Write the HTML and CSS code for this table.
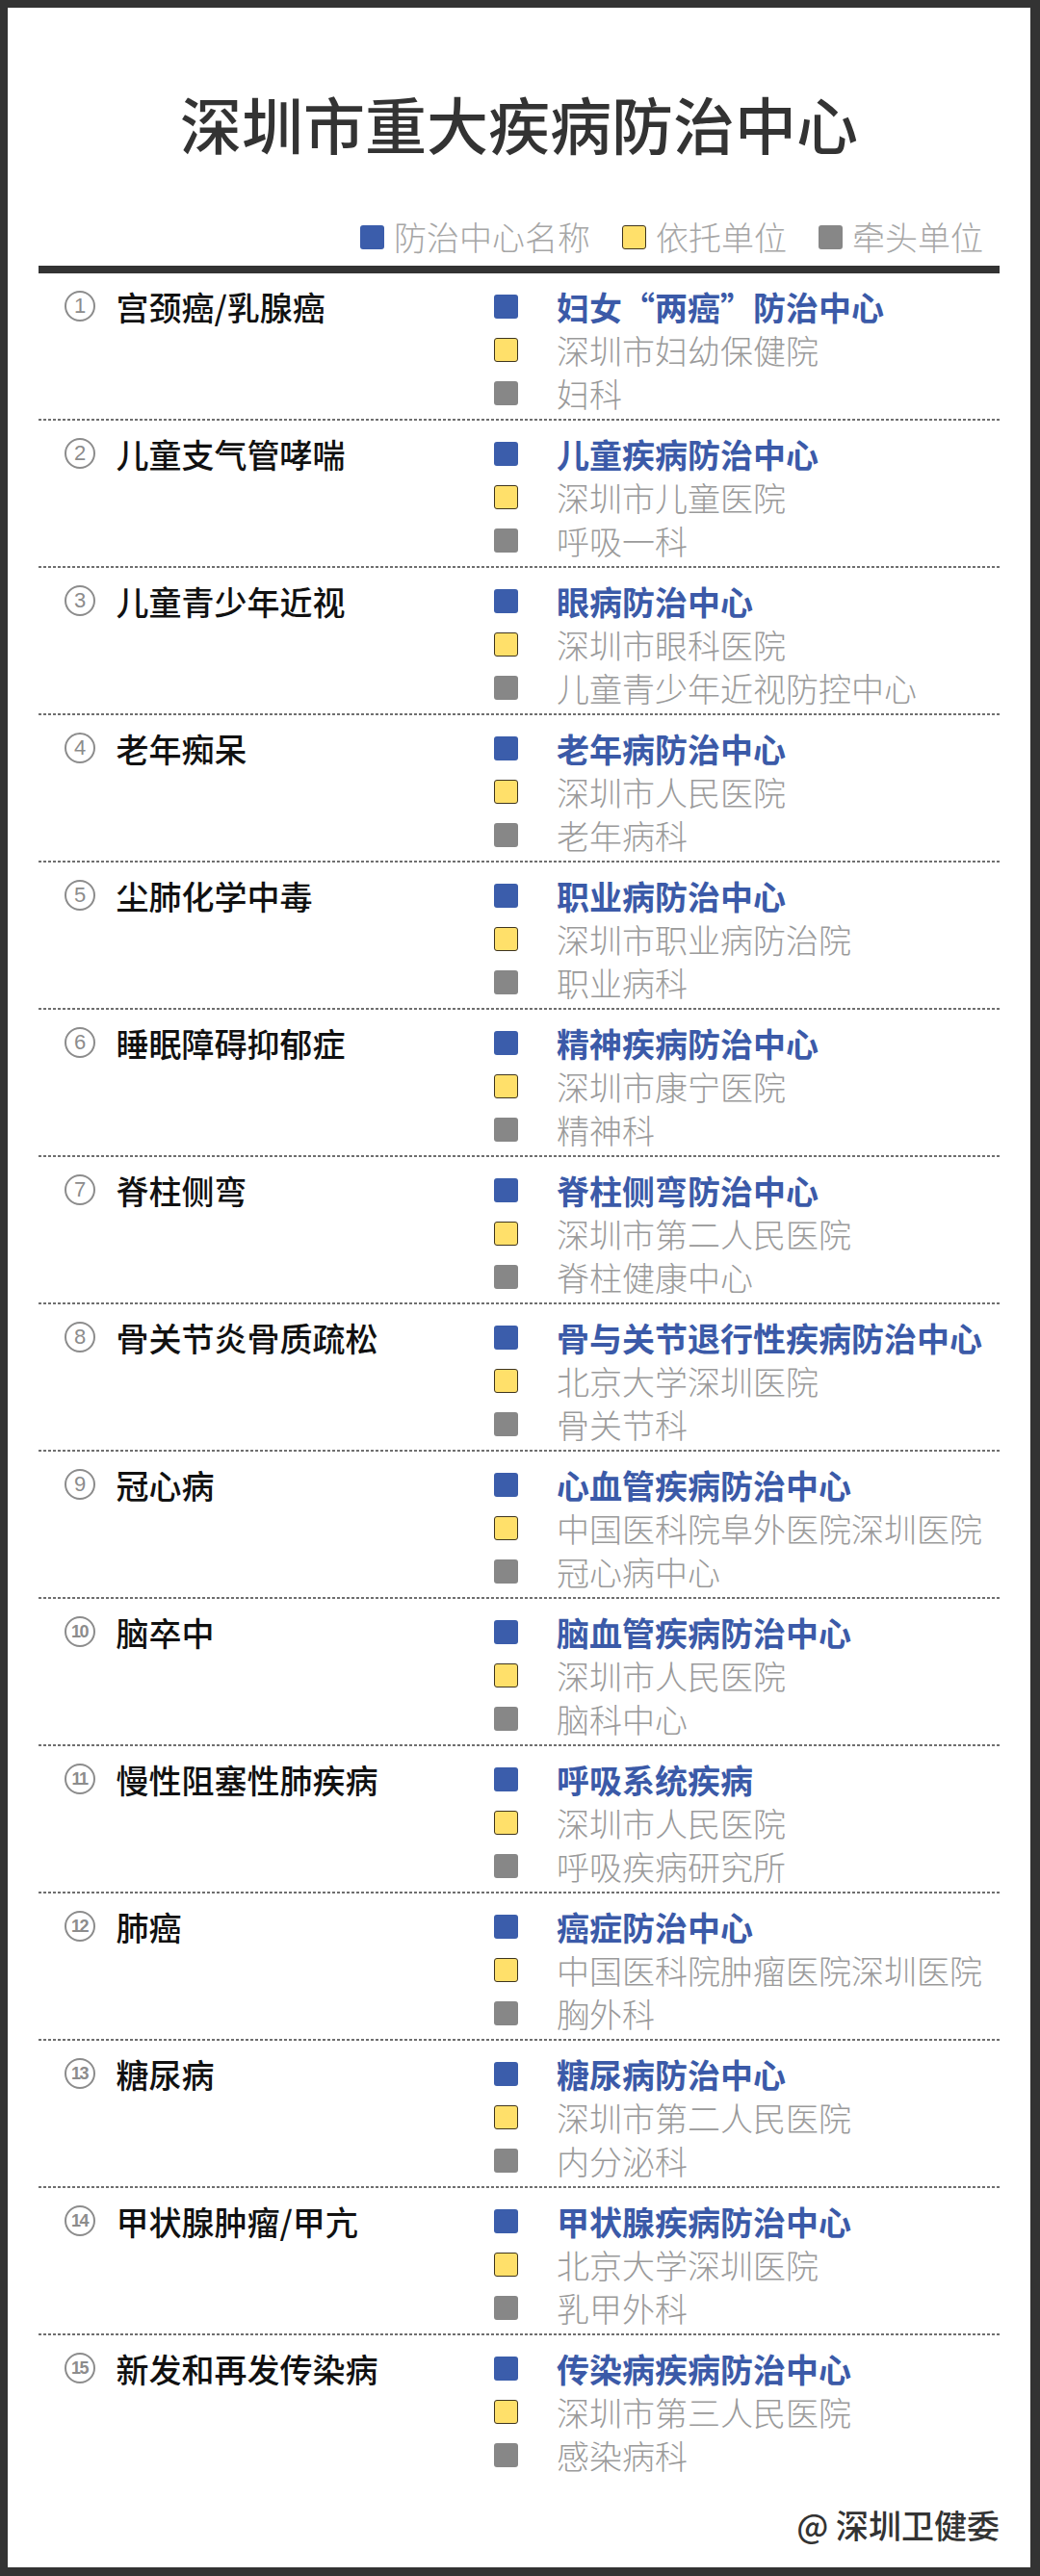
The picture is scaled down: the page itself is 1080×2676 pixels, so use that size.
FILE: index.html
```html
<!DOCTYPE html>
<html lang="zh-CN">
<head>
<meta charset="utf-8">
<title>深圳市重大疾病防治中心</title>
<link rel="stylesheet" href="styles.css">
</head>
<body>
<div class="frame">
  <div class="sheet">
    <h1 class="title">深圳市重大疾病防治中心</h1>
    <div class="legend">
      <span class="legend-item"><i class="sq sq-blue"></i>防治中心名称</span>
      <span class="legend-item"><i class="sq sq-yellow"></i>依托单位</span>
      <span class="legend-item"><i class="sq sq-gray"></i>牵头单位</span>
    </div>
    <div class="rule"></div>

    <div class="rows">
    <div class="row">
      <div class="disease"><span class="num">1</span><span class="name">宫颈癌/乳腺癌</span></div>
      <div class="units">
        <div class="line center"><i class="sq sq-blue"></i>妇女“两癌”防治中心</div>
        <div class="line host"><i class="sq sq-yellow"></i>深圳市妇幼保健院</div>
        <div class="line lead"><i class="sq sq-gray"></i>妇科</div>
      </div>
    </div>
    <div class="row">
      <div class="disease"><span class="num">2</span><span class="name">儿童支气管哮喘</span></div>
      <div class="units">
        <div class="line center"><i class="sq sq-blue"></i>儿童疾病防治中心</div>
        <div class="line host"><i class="sq sq-yellow"></i>深圳市儿童医院</div>
        <div class="line lead"><i class="sq sq-gray"></i>呼吸一科</div>
      </div>
    </div>
    <div class="row">
      <div class="disease"><span class="num">3</span><span class="name">儿童青少年近视</span></div>
      <div class="units">
        <div class="line center"><i class="sq sq-blue"></i>眼病防治中心</div>
        <div class="line host"><i class="sq sq-yellow"></i>深圳市眼科医院</div>
        <div class="line lead"><i class="sq sq-gray"></i>儿童青少年近视防控中心</div>
      </div>
    </div>
    <div class="row">
      <div class="disease"><span class="num">4</span><span class="name">老年痴呆</span></div>
      <div class="units">
        <div class="line center"><i class="sq sq-blue"></i>老年病防治中心</div>
        <div class="line host"><i class="sq sq-yellow"></i>深圳市人民医院</div>
        <div class="line lead"><i class="sq sq-gray"></i>老年病科</div>
      </div>
    </div>
    <div class="row">
      <div class="disease"><span class="num">5</span><span class="name">尘肺化学中毒</span></div>
      <div class="units">
        <div class="line center"><i class="sq sq-blue"></i>职业病防治中心</div>
        <div class="line host"><i class="sq sq-yellow"></i>深圳市职业病防治院</div>
        <div class="line lead"><i class="sq sq-gray"></i>职业病科</div>
      </div>
    </div>
    <div class="row">
      <div class="disease"><span class="num">6</span><span class="name">睡眠障碍抑郁症</span></div>
      <div class="units">
        <div class="line center"><i class="sq sq-blue"></i>精神疾病防治中心</div>
        <div class="line host"><i class="sq sq-yellow"></i>深圳市康宁医院</div>
        <div class="line lead"><i class="sq sq-gray"></i>精神科</div>
      </div>
    </div>
    <div class="row">
      <div class="disease"><span class="num">7</span><span class="name">脊柱侧弯</span></div>
      <div class="units">
        <div class="line center"><i class="sq sq-blue"></i>脊柱侧弯防治中心</div>
        <div class="line host"><i class="sq sq-yellow"></i>深圳市第二人民医院</div>
        <div class="line lead"><i class="sq sq-gray"></i>脊柱健康中心</div>
      </div>
    </div>
    <div class="row">
      <div class="disease"><span class="num">8</span><span class="name">骨关节炎骨质疏松</span></div>
      <div class="units">
        <div class="line center"><i class="sq sq-blue"></i>骨与关节退行性疾病防治中心</div>
        <div class="line host"><i class="sq sq-yellow"></i>北京大学深圳医院</div>
        <div class="line lead"><i class="sq sq-gray"></i>骨关节科</div>
      </div>
    </div>
    <div class="row">
      <div class="disease"><span class="num">9</span><span class="name">冠心病</span></div>
      <div class="units">
        <div class="line center"><i class="sq sq-blue"></i>心血管疾病防治中心</div>
        <div class="line host"><i class="sq sq-yellow"></i>中国医科院阜外医院深圳医院</div>
        <div class="line lead"><i class="sq sq-gray"></i>冠心病中心</div>
      </div>
    </div>
    <div class="row">
      <div class="disease"><span class="num num2">10</span><span class="name">脑卒中</span></div>
      <div class="units">
        <div class="line center"><i class="sq sq-blue"></i>脑血管疾病防治中心</div>
        <div class="line host"><i class="sq sq-yellow"></i>深圳市人民医院</div>
        <div class="line lead"><i class="sq sq-gray"></i>脑科中心</div>
      </div>
    </div>
    <div class="row">
      <div class="disease"><span class="num num2">11</span><span class="name">慢性阻塞性肺疾病</span></div>
      <div class="units">
        <div class="line center"><i class="sq sq-blue"></i>呼吸系统疾病</div>
        <div class="line host"><i class="sq sq-yellow"></i>深圳市人民医院</div>
        <div class="line lead"><i class="sq sq-gray"></i>呼吸疾病研究所</div>
      </div>
    </div>
    <div class="row">
      <div class="disease"><span class="num num2">12</span><span class="name">肺癌</span></div>
      <div class="units">
        <div class="line center"><i class="sq sq-blue"></i>癌症防治中心</div>
        <div class="line host"><i class="sq sq-yellow"></i>中国医科院肿瘤医院深圳医院</div>
        <div class="line lead"><i class="sq sq-gray"></i>胸外科</div>
      </div>
    </div>
    <div class="row">
      <div class="disease"><span class="num num2">13</span><span class="name">糖尿病</span></div>
      <div class="units">
        <div class="line center"><i class="sq sq-blue"></i>糖尿病防治中心</div>
        <div class="line host"><i class="sq sq-yellow"></i>深圳市第二人民医院</div>
        <div class="line lead"><i class="sq sq-gray"></i>内分泌科</div>
      </div>
    </div>
    <div class="row">
      <div class="disease"><span class="num num2">14</span><span class="name">甲状腺肿瘤/甲亢</span></div>
      <div class="units">
        <div class="line center"><i class="sq sq-blue"></i>甲状腺疾病防治中心</div>
        <div class="line host"><i class="sq sq-yellow"></i>北京大学深圳医院</div>
        <div class="line lead"><i class="sq sq-gray"></i>乳甲外科</div>
      </div>
    </div>
    <div class="row">
      <div class="disease"><span class="num num2">15</span><span class="name">新发和再发传染病</span></div>
      <div class="units">
        <div class="line center"><i class="sq sq-blue"></i>传染病疾病防治中心</div>
        <div class="line host"><i class="sq sq-yellow"></i>深圳市第三人民医院</div>
        <div class="line lead"><i class="sq sq-gray"></i>感染病科</div>
      </div>
    </div>
    </div>

    <div class="footer">@ 深圳卫健委</div>
  </div>
</div>
</body>
</html>
```

FILE: styles.css
```css
html, body {
  margin: 0;
  padding: 0;
  background: #333;
}

body {
  font-family: "Noto Sans CJK SC", "Noto Sans", sans-serif;
}

.frame {
  width: 1080px;
  height: 2676px;
  box-sizing: border-box;
  border-style: solid;
  border-color: #333;
  border-width: 8px 10px 9px 8px;
  background: #fff;
  overflow: hidden;
}

.sheet {
  padding: 87px 32px 0 32px;
}

.title {
  margin: 0;
  font-size: 64px;
  line-height: 64px;
  font-weight: 500;
  color: #333;
  text-align: center;
}

.legend {
  margin-top: 67px;
  display: flex;
  justify-content: flex-end;
  padding-right: 17px;
  font-size: 34px;
  line-height: 40px;
  font-weight: 300;
  color: #a6a6a6;
}

.legend-item {
  display: flex;
  align-items: center;
  margin-left: 33px;
}

.legend-item:first-child {
  margin-left: 0;
}

.legend .sq {
  margin-right: 10px;
}

.sq {
  display: block;
  flex: none;
  width: 25px;
  height: 25px;
  box-sizing: border-box;
  border-radius: 3px;
}

.sq-blue {
  background: #3b5dab;
}

.sq-yellow {
  background: #ffe06a;
  border: 1.5px solid #3e3520;
}

.sq-gray {
  background: #878787;
}

.rule {
  margin-top: 10px;
  height: 8px;
  background: #333;
}

.row {
  display: grid;
  grid-template-columns: 473px 1fr;
  padding: 11.5px 0 6.5px 0;
  background-image: repeating-linear-gradient(to right, #6f6f6f 0 3px, transparent 3px 5px);
  background-size: 100% 2px;
  background-position: left bottom;
  background-repeat: no-repeat;
}

.row:last-child {
  background-image: none;
  padding-bottom: 4.5px;
}

.disease {
  display: flex;
  align-items: flex-start;
  padding-left: 27px;
  font-size: 34px;
  line-height: 45px;
}

.num {
  flex: none;
  box-sizing: border-box;
  width: 32px;
  height: 32px;
  margin-top: 6.5px;
  margin-right: 21.5px;
  border: 2px solid #8c8c8c;
  border-radius: 50%;
  display: flex;
  align-items: center;
  justify-content: center;
  font-family: "Liberation Sans", sans-serif;
  font-size: 22px;
  line-height: 1;
  color: #8c8c8c;
}

.num2 {
  font-size: 18px;
  font-weight: 700;
  letter-spacing: -1.5px;
  padding-right: 1px;
}

.name {
  color: #111;
  font-weight: 500;
}

.units {
  display: flex;
  flex-direction: column;
  font-size: 34px;
  line-height: 45px;
}

.line {
  display: flex;
  align-items: center;
  white-space: nowrap;
}

.line .sq {
  margin-right: 40px;
}

.center {
  color: #3b5aa8;
  font-weight: 700;
}

.host,
.lead {
  color: #9a9a9a;
  font-weight: 300;
}

.footer {
  margin-top: 26px;
  text-align: right;
  font-size: 34px;
  line-height: 40px;
  font-weight: 500;
  color: #333;
}
```
